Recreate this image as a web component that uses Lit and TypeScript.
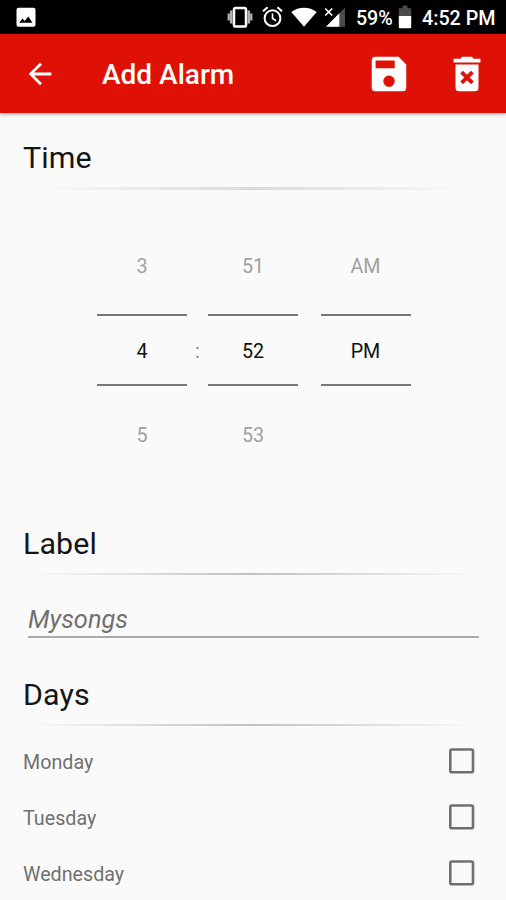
import { LitElement, html, css } from "lit";
import { customElement, property } from "lit/decorators.js";

@customElement("status-bar")
class StatusBar extends LitElement {
  static styles = css`
    :host { display: flex; align-items: center; height: 34px; padding: 0 10px 0 16px; background: #000; color: #fff;
      font: 500 19.7px/34px Roboto, sans-serif; }
    svg { display: block; flex: none; }
    .spacer { flex: 1; }
    .vibrate { margin-right: 9px; }
    .alarm { margin-right: 8px; }
    .wifi { margin-right: 7px; }
    .signal { margin-right: 10px; }
    .percent { width: 37px; margin-right: 5px; white-space: nowrap; padding-top: 3px; letter-spacing: -.1px; }
    .battery { margin-right: 10px; }
    .clock { width: 74px; white-space: nowrap; padding-top: 3px; }
  `;
  render() {
    return html`
      <svg width="20" height="20" viewBox="0 0 20 20">
        <rect x=".5" y=".7" width="19" height="19" rx="2" fill="#fff"/>
        <path d="m3.2 15.7 3.3-4.2 2.2 2.5 3.6-4.5 4.2 6.2z" fill="#000"/>
      </svg>
      <div class="spacer"></div>
      <svg class="vibrate" width="26" height="22" viewBox="0 0 26 22" fill="none" stroke="#fff">
        <rect x="7" y="2" width="12" height="18.5" rx="1.6" stroke-width="2.5"/>
        <path d="M4.2 4.5v13M21.8 4.5v13" stroke-width="2.6" opacity=".7"/>
        <path d="M1.7 7.5v7M24.3 7.5v7" stroke-width="2.2" opacity=".7"/>
      </svg>
      <svg class="alarm" width="21" height="22" viewBox="0 0 21 22" fill="none" stroke="#fff" stroke-width="2">
        <circle cx="10.5" cy="12.2" r="7.9"/>
        <path d="M10.5 7.4v5.1l3.7 2.2" stroke-width="1.6"/>
        <path d="m1 5.2 4.6-3.9M20 5.2l-4.6-3.9"/>
      </svg>
      <svg class="wifi" width="26" height="20" viewBox="0 0 26 20"><path d="M.3 5C7.6-.7 18.4-.7 25.7 5L13 19.8z" fill="#fff"/></svg>
      <svg class="signal" width="22" height="22" viewBox="0 0 22 22">
        <path d="M21 1.5v19.2H2z" fill="#4b4b4b"/>
        <path d="M15.3 7.2v13.5H2z" fill="#fff"/>
        <path d="m1.2 2.5 7 7m0-7-7 7" stroke="#fff" stroke-width="1.7"/>
      </svg>
      <span class="percent">59%</span>
      <svg class="battery" width="14" height="24" viewBox="0 0 14 24">
        <path d="M4.5.8h5v2.4h3.7v8H.8v-8h3.7z" fill="#4b4b4b"/>
        <path d="M.8 11h12.4v11.2a1 1 0 0 1-1 1H1.8a1 1 0 0 1-1-1z" fill="#fff"/>
      </svg>
      <span class="clock">4:52 PM</span>
    `;
  }
}

@customElement("app-bar")
class AppBar extends LitElement {
  static styles = css`
    :host { display: flex; align-items: center; height: 79px; padding: 0 16px 0 23px; box-sizing: border-box;
      background: #df1005; color: #fff; box-shadow: 0 1px 4px rgba(0, 0, 0, .38); }
    svg { display: block; flex: none; fill: #fff; }
    .title { flex: 1; margin: 0 0 0 45px; padding-top: 3px; font: 500 28px/36px Roboto, sans-serif; white-space: nowrap; }
    .save { margin-right: 32px; }
  `;
  render() {
    return html`
      <svg width="34" height="34" viewBox="0 0 24 24"><path d="M20 11H7.83l5.59-5.59L12 4l-8 8 8 8 1.41-1.41L7.83 13H20z"/></svg>
      <h1 class="title">Add Alarm</h1>
      <svg class="save" width="46" height="46" viewBox="0 0 24 24"><path fill-rule="evenodd" d="M17 3H5a2 2 0 0 0-2 2v14a2 2 0 0 0 2 2h14a2 2 0 0 0 2-2V7zM15 9H5V5h10zM12 12.8a3 3 0 1 1 0 6 3 3 0 0 1 0-6z"/></svg>
      <svg width="46" height="46" viewBox="0 0 24 24"><path fill-rule="evenodd" d="M6 19a2 2 0 0 0 2 2h8a2 2 0 0 0 2-2V7H6zm2.46-7.32 1.41-1.41L12 12.39l2.12-2.12 1.41 1.41-2.12 2.12 2.12 2.12-1.41 1.41L12 15.21l-2.12 2.12-1.41-1.41 2.12-2.12zM15.5 4l-1-1h-5l-1 1H5v2h14V4z"/></svg>
    `;
  }
}

@customElement("section-heading")
class SectionHeading extends LitElement {
  @property() label = "";
  @property({ type: Boolean, reflect: true }) soft = false;
  static styles = css`
    :host { display: flex; flex-direction: column; }
    h2 { margin: 0; height: 47px; font: 400 30.4px/36px Roboto, sans-serif; letter-spacing: .1px; color: #151515; }
    .rule { height: 2px; background: linear-gradient(90deg, transparent 1%, #c0c0c0 50%, transparent 99%); }
    :host([soft]) .rule { height: 3px; background: linear-gradient(90deg, transparent 2%, #dadada 50%, transparent 98%); }
  `;
  render() {
    return html`<h2>${this.label}</h2><div class="rule"></div>`;
  }
}

@customElement("wheel-column")
class WheelColumn extends LitElement {
  @property({ type: Array }) values: string[] = [];
  static styles = css`
    :host { display: grid; grid-template-rows: 97px 72px 97px; width: 90px; text-align: center;
      font: 400 19.7px/24px Roboto, sans-serif; color: #a1a1a1; }
    div { display: flex; align-items: center; justify-content: center; box-sizing: border-box; }
    .previous { padding-top: 2px; }
    .next { padding-top: 3px; }
    .current { border: solid #777; border-width: 2px 0; color: #111; padding-top: 3px; }
  `;
  render() {
    const [previous, current, next] = this.values;
    return html`<div class="previous">${previous}</div><div class="current">${current}</div><div class="next">${next}</div>`;
  }
}

@customElement("day-row")
class DayRow extends LitElement {
  @property() day = "";
  static styles = css`
    :host { display: flex; align-items: center; justify-content: space-between; height: 56.2px; padding-right: 8px;
      font: 400 19.7px/24px Roboto, sans-serif; color: #707070; }
    .name { padding-top: 4px; }
    .box { display: block; fill: none; stroke: #707070; stroke-width: 2.6; }
  `;
  render() {
    return html`
      <span class="name">${this.day}</span>
      <svg class="box" width="26" height="26" viewBox="0 0 26 26"><rect x="1.3" y="1.5" width="22.7" height="22.7" rx="1.5"/></svg>
    `;
  }
}

@customElement("app-root")
class AppRoot extends LitElement {
  static styles = css`
    :host { display: flex; flex-direction: column; height: 900px; overflow: hidden; background: #fafafa; }
    status-bar, app-bar { flex: none; }
    main { padding: 27px 23px 0; }
    .picker { display: flex; height: 266px; margin: 27px 0 0 74px; }
    .colon { width: 21px; padding-top: 3px; text-align: center; font: 400 19.7px/24px Roboto, sans-serif; color: #8a8a8a; align-self: center; }
    .period { margin-left: 22.5px; }
    .label-head { margin-top: 43px; }
    .field { height: 63px; box-sizing: border-box; margin: 0 4px 0 5px; padding-top: 28px; border-bottom: 2px solid #aaa;
      font: italic 400 25.4px/32px Roboto, sans-serif; color: #707070; }
    .days-head { margin-top: 39px; }
    .days { padding-top: 6.5px; }
  `;
  render() {
    return html`
      <status-bar></status-bar>
      <app-bar></app-bar>
      <main>
        <section-heading label="Time" soft></section-heading>
        <div class="picker">
          <wheel-column .values=${["3", "4", "5"]}></wheel-column>
          <span class="colon">:</span>
          <wheel-column .values=${["51", "52", "53"]}></wheel-column>
          <wheel-column class="period" .values=${["AM", "PM", ""]}></wheel-column>
        </div>
        <section-heading class="label-head" label="Label"></section-heading>
        <div class="field">Mysongs</div>
        <section-heading class="days-head" label="Days"></section-heading>
        <div class="days">
          ${["Monday", "Tuesday", "Wednesday"].map((day) => html`<day-row .day=${day}></day-row>`)}
        </div>
      </main>
    `;
  }
}
